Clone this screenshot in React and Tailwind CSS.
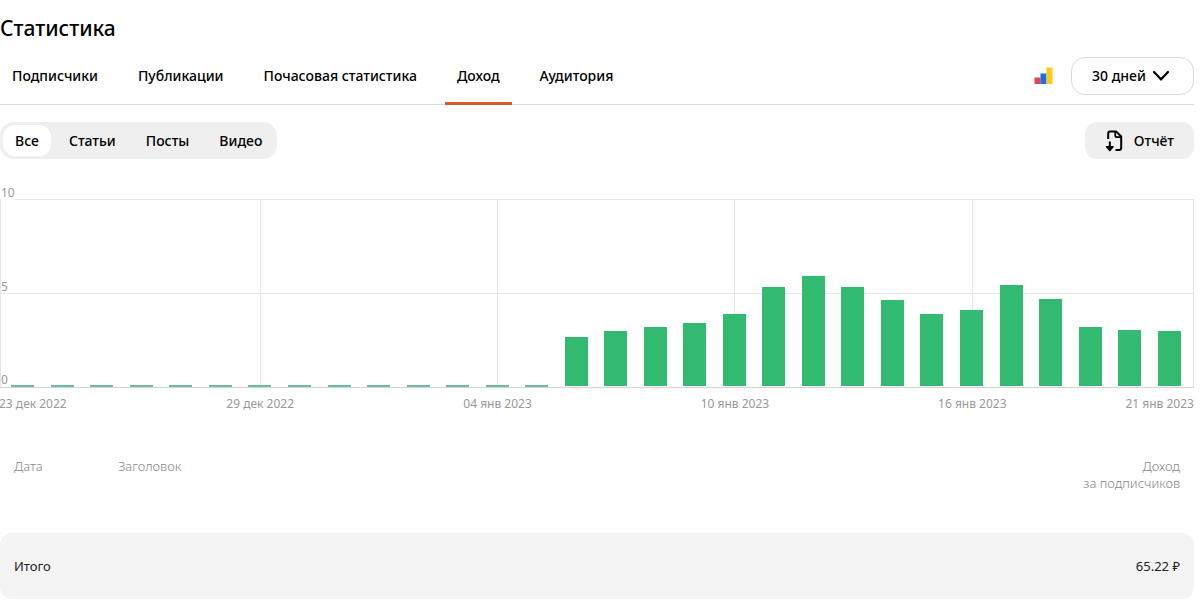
import { useState } from "react";

const tabs = ["Подписчики", "Публикации", "Почасовая статистика", "Доход", "Аудитория"];
const filters = ["Все", "Статьи", "Посты", "Видео"];

const income = [
  0, 0, 0, 0, 0, 0, 0, 0, 0, 0, 0, 0, 0, 0, 2.65, 2.98, 3.2, 3.42, 3.9, 5.36,
  5.92, 5.36, 4.64, 3.9, 4.1, 5.47, 4.7, 3.2, 3.03, 2.98,
];
const maxIncome = 10;

const dates = {
  0: "23 дек 2022",
  6: "29 дек 2022",
  12: "04 янв 2023",
  18: "10 янв 2023",
  24: "16 янв 2023",
  29: "21 янв 2023",
};

function MetricsIcon() {
  return (
    <svg className="h-[18px] w-[19px]" viewBox="0 0 19 18" aria-hidden="true">
      <rect x="0.5" y="10.5" width="6" height="6.5" fill="#e8424b" />
      <rect x="6.5" y="6.5" width="6" height="10.5" fill="#1470ea" />
      <rect x="12.5" y="0.5" width="6" height="16.5" fill="#fcca1c" />
    </svg>
  );
}

function ReportIcon() {
  return (
    <svg
      className="h-[22px] w-[18px]"
      viewBox="0 0 18 22"
      fill="none"
      stroke="black"
      strokeWidth="2"
      strokeLinejoin="round"
      aria-hidden="true"
    >
      <path d="M3.2 9V3.2Q3.2 1.4 5 1.4H11L16.2 6.5V17.8Q16.2 20 14 20H10.5" />
      <path d="M10.2 1.5V5.2Q10.2 7.2 12.2 7.2H16" strokeWidth="1.7" />
      <path d="M4.8 11.5V18" />
      <path d="M1.6 16.8L4.8 20.4L8 16.8Z" fill="black" strokeWidth="1.6" />
    </svg>
  );
}

function IncomeChart() {
  const lastDay = income.length - 1;

  // the edge labels stay inside the chart, the rest are centered on their day
  const labelAlign = (i) => {
    if (i === 0) return "justify-start";
    if (i === lastDay) return "justify-end";
    return "justify-center";
  };

  return (
    <div className="mt-10 text-xs text-[#999999]">
      <div className="relative h-[189px] border border-b-[#d5d5d5] border-[#e6e6e6]">
        <span className="absolute bottom-full left-0 bg-white leading-[14px]">10</span>
        <span className="absolute bottom-1/2 left-0 leading-[14px]">5</span>
        <span className="absolute bottom-0 left-0 leading-[14px]">0</span>
        <div className="absolute inset-x-0 top-[93px] border-t border-[#e6e6e6]" />
        <div className="relative flex h-full pr-1 pl-[2px]">
          {income.map((value, i) => (
            <div key={i} className="relative flex flex-1 items-end justify-center">
              {dates[i] && i > 0 && i < lastDay && (
                <div className="absolute inset-y-0 left-1/2 border-l border-[#e6e6e6]" />
              )}
              {value > 0 ? (
                <div
                  className="relative w-[23px] border-b border-white bg-[#32ba70]"
                  style={{ height: `${(value / maxIncome) * 100}%` }}
                />
              ) : (
                <div className="relative h-[2px] w-[23px] bg-[#6dbb99]" />
              )}
            </div>
          ))}
        </div>
      </div>
      <div className="mt-2 flex pr-1 pl-[3px] leading-4">
        {income.map((_, i) => (
          <div key={i} className={`flex min-w-0 flex-1 whitespace-nowrap ${labelAlign(i)}`}>
            <span className="first:-mx-1">{dates[i]}</span>
          </div>
        ))}
      </div>
    </div>
  );
}

function App() {
  const [tab, setTab] = useState("Доход");
  const [filter, setFilter] = useState("Все");
  const [period, setPeriod] = useState("30");

  return (
    <main className="overflow-hidden bg-white pt-3 pr-[6px] font-['Noto_Sans',sans-serif] text-sm text-black">
      <h1 className="text-[21px] leading-8 font-medium">Статистика</h1>

      <div className="mt-1 flex items-center justify-between border-b border-[#dddddd]">
        <nav className="flex gap-4">
          {tabs.map((name) => (
            <a
              key={name}
              href="#"
              onClick={() => setTab(name)}
              className={`-mb-px border-b-[3px] px-3 pt-[18px] pb-4 leading-5 font-medium ${
                tab === name ? "border-[#d65b31]" : "border-transparent"
              }`}
            >
              {name}
            </a>
          ))}
        </nav>
        <div className="flex items-center gap-[18px]">
          <MetricsIcon />
          <div className="relative">
            <select
              aria-label="Период"
              value={period}
              onChange={(e) => setPeriod(e.target.value)}
              className="block h-[38px] w-[123px] appearance-none rounded-[14px] border border-[#d9d9d9] bg-white pl-5 font-medium"
            >
              <option value="7">7 дней</option>
              <option value="30">30 дней</option>
              <option value="90">90 дней</option>
            </select>
            <svg
              className="pointer-events-none absolute top-[13px] right-6 h-3 w-[18px]"
              viewBox="0 0 18 12"
              fill="none"
              stroke="black"
              strokeWidth="2.2"
              strokeLinecap="round"
            >
              <path d="M2 2L9 9.3L16 2" />
            </svg>
          </div>
        </div>
      </div>

      <div className="mt-[17px] flex items-center justify-between">
        <div className="flex gap-[6px] rounded-[14px] bg-[#efefef] p-[3px]">
          {filters.map((name) => (
            <button
              key={name}
              type="button"
              onClick={() => setFilter(name)}
              className={`h-[31px] rounded-xl px-3 font-medium ${
                filter === name ? "bg-white" : ""
              }`}
            >
              {name}
            </button>
          ))}
        </div>
        <button
          type="button"
          className="flex h-[37px] items-center gap-[11px] rounded-xl bg-[#efefef] px-5 font-medium"
        >
          <ReportIcon />
          Отчёт
        </button>
      </div>

      <IncomeChart />

      <table className="mt-[46px] w-full text-left">
        <thead>
          <tr className="align-top text-[13px] leading-[17px] text-[#888888]">
            <th className="h-[75px] w-[104px] pl-[14px] font-light">Дата</th>
            <th className="pl-[14px] font-light">Заголовок</th>
            <th className="pr-[14px] text-right font-light">
              Доход
              <br />
              за подписчиков
            </th>
          </tr>
        </thead>
        <tfoot>
          <tr className="bg-[#f4f4f4] text-[13px] text-[#222222]">
            <td colSpan={2} className="h-[66px] rounded-l-xl pl-[14px]">
              Итого
            </td>
            <td className="rounded-r-xl pr-[14px] text-right">65.22 ₽</td>
          </tr>
        </tfoot>
      </table>
    </main>
  );
}

export default App;
